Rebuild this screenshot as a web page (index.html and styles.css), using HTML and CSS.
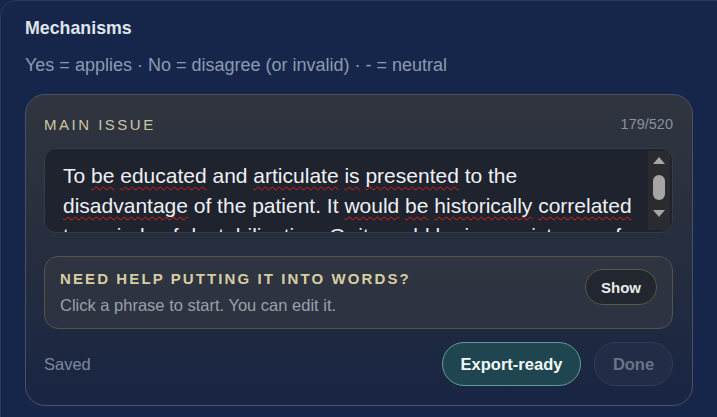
FILE: index.html
```html
<!DOCTYPE html>
<html lang="en">
<head>
<meta charset="utf-8">
<title>Mechanisms</title>
<link rel="stylesheet" href="styles.css">
</head>
<body>
<section class="panel">
  <h2 class="panel-title">Mechanisms</h2>
  <p class="panel-sub">Yes = applies · No = disagree (or invalid) · - = neutral</p>

  <div class="card">
    <div class="card-head">
      <span class="card-label">MAIN ISSUE</span>
      <span class="card-count">179/520</span>
    </div>

    <div class="editor">
      <div class="editor-text">To <span class="sp">be</span> <span class="sp">educated</span> and <span class="sp">articulate</span> <span class="sp">is</span> <span class="sp">presented</span> to the <span class="sp">disadvantage</span> of the patient. It <span class="sp">would</span> <span class="sp">be</span> <span class="sp">historically</span> <span class="sp">correlated</span> to <span class="sp">periods</span> of <span class="sp">destabilization</span>. Or it <span class="sp">would</span> <span class="sp">be</span> in <span class="sp">coexistence</span> of something else entirely.</div>
      <div class="scrollbar">
        <span class="arrow up"></span>
        <span class="thumb"></span>
        <span class="arrow down"></span>
      </div>
    </div>

    <div class="help">
      <div class="help-text">
        <div class="help-title">NEED HELP PUTTING IT INTO WORDS?</div>
        <div class="help-sub">Click a phrase to start. You can edit it.</div>
      </div>
      <button class="btn-show">Show</button>
    </div>

    <div class="actions">
      <span class="status">Saved</span>
      <div class="action-btns">
        <button class="btn btn-export">Export-ready</button>
        <button class="btn btn-done">Done</button>
      </div>
    </div>
  </div>
</section>
</body>
</html>
```

FILE: styles.css
```css
* { box-sizing: border-box; }

html, body {
  margin: 0;
  padding: 0;
  background: #152548;
  height: 100%;
  overflow: hidden;
}

body {
  font-family: "Liberation Sans", Arial, sans-serif;
  color: #e6e9ef;
}

.panel {
  width: 740px;
  height: 440px;
  border: 1px solid #2a3a5e;
  border-radius: 16px;
  background: #16264a;
  padding: 17px 24px 0 24px;
  overflow: hidden;
}

.panel-title {
  margin: 0;
  font-size: 17.8px;
  font-weight: bold;
  line-height: 20px;
  color: #dfe3ea;
}

.panel-sub {
  margin: 17px 0 0 0;
  font-size: 18px;
  line-height: 20px;
  color: #8d99b2;
}

.card {
  width: 668px;
  margin-top: 19px;
  border: 1px solid #4a5162;
  border-radius: 20px;
  background: linear-gradient(180deg, #30353f 0%, #272e3d 45%, #182543 100%);
  padding: 20px 19px 19px 18px;
}

.card-head {
  display: flex;
  justify-content: space-between;
  align-items: center;
  height: 18px;
}

.card-label {
  font-size: 15px;
  letter-spacing: 2.5px;
  color: #cdc6a2;
}

.card-count {
  font-size: 14.5px;
  color: #8b919c;
}

.editor {
  margin-top: 15px;
  height: 85px;
  border: 1px solid #363c4a;
  border-radius: 12px;
  background: #1e232e;
  display: flex;
  overflow: hidden;
}

.editor-text {
  flex: 1;
  padding: 12px 14px 0 18px;
  font-size: 21px;
  line-height: 30px;
  color: #eef0f4;
  overflow: hidden;
}

.sp {
  text-decoration: underline wavy #e0201c;
  text-decoration-thickness: 1.4px;
  text-underline-offset: 3px;
  text-decoration-skip-ink: none;
}

.scrollbar {
  width: 22px;
  margin: 2px 2px 2px 0;
  background: #2a2b2e;
  display: flex;
  flex-direction: column;
  align-items: center;
  padding-top: 6px;
}

.arrow {
  width: 0;
  height: 0;
  border-left: 6px solid transparent;
  border-right: 6px solid transparent;
}

.arrow.up {
  border-bottom: 7px solid #a5a5a5;
}

.arrow.down {
  border-top: 7px solid #a5a5a5;
  margin-top: 10px;
}

.thumb {
  width: 12px;
  height: 25px;
  margin-top: 11px;
  border-radius: 6px;
  background: #a5a5a5;
}

.help {
  margin-top: 23px;
  height: 73px;
  border: 1px solid #55544a;
  border-radius: 14px;
  background: rgba(60, 62, 66, 0.45);
  display: flex;
  align-items: flex-start;
  justify-content: space-between;
  padding: 12px 15px 0 15px;
}

.help-title {
  font-size: 15px;
  font-weight: bold;
  letter-spacing: 2.1px;
  color: #d6cea4;
  line-height: 20px;
}

.help-sub {
  margin-top: 6px;
  font-size: 16.5px;
  line-height: 20px;
  color: #9ba0aa;
}

.btn-show {
  height: 36px;
  width: 72px;
  border-radius: 18px;
  border: 1px solid #595849;
  background: #22262e;
  color: #e9eaec;
  font-family: "Liberation Sans", Arial, sans-serif;
  font-weight: bold;
  font-size: 15px;
  padding: 0;
}

.actions {
  margin-top: 13px;
  display: flex;
  justify-content: space-between;
  align-items: center;
}

.status {
  font-size: 16.5px;
  color: #7e8799;
}

.action-btns {
  display: flex;
  gap: 13px;
}

.btn {
  height: 44px;
  border-radius: 22px;
  font-family: "Liberation Sans", Arial, sans-serif;
  font-weight: bold;
  font-size: 16.5px;
  padding: 0;
}

.btn-export {
  width: 139px;
  border: 1px solid #5f9e96;
  background: #1f4550;
  color: #f1f8f6;
}

.btn-done {
  width: 79px;
  border: 1px solid #323c5a;
  background: #232c47;
  color: #6b7387;
}
```
